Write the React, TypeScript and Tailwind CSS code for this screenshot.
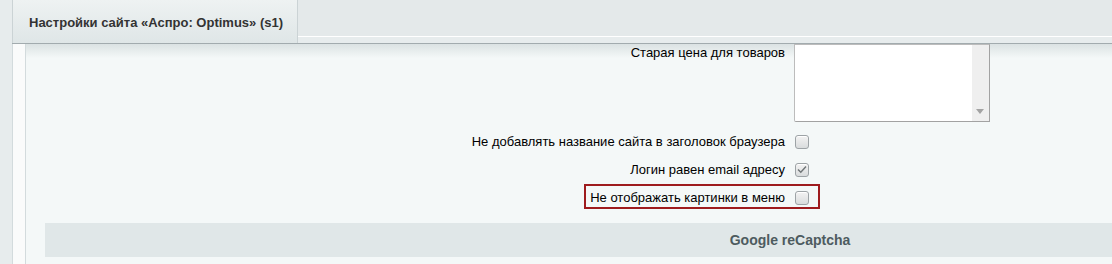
import React from 'react'

type Row = {
  label: string
  checked?: boolean
  highlighted?: boolean
}

const checkRows: Row[] = [
  { label: 'Не добавлять название сайта в заголовок браузера' },
  { label: 'Логин равен email адресу', checked: true },
  { label: 'Не отображать картинки в меню', highlighted: true },
]

const Checkbox = ({ checked }: { checked?: boolean }) => (
  <span className="relative inline-flex h-[14px] w-[14px] items-center justify-center rounded-[3px] border border-[#9da3a6] bg-[linear-gradient(to_bottom,#f3f3f3,#d9dcdd)] shadow-[inset_0_1px_0_#fff]">
    {checked && (
      <svg width="10" height="9" viewBox="0 0 10 9" fill="none">
        <path d="M1 4.5l2.8 2.8L9 1.5" stroke="#6f7577" strokeWidth="1.4" />
      </svg>
    )}
  </span>
)

const App = () => {
  return (
    <div className="relative h-[264px] w-[1112px] overflow-hidden bg-[#e7eced] font-['Liberation_Sans',Arial,sans-serif] text-[13px] text-black">
      {/* Tabs */}
      <div className="flex h-[43px]">
        <div className="w-[12px] shrink-0" />
        <div className="flex w-[286px] shrink-0 items-center border-x border-[#cbd3d5] bg-[linear-gradient(to_bottom,#eef2f2,#dfe6e7)] pl-[16px] pt-[2px] text-[13px] font-bold text-[#333]">
          Настройки сайта «Аспро: Optimus» (s1)
        </div>
        <div className="flex-1">
          <div className="h-[37px] border-b border-white bg-[#e4e9ea]" />
        </div>
      </div>

      {/* Body */}
      <div className="flex">
        <div className="w-[12px] shrink-0" />
        <div className="flex flex-1 border-t border-[#a2abae]">
          <div className="h-[221px] w-[14px] shrink-0 border-x border-[#d3dbdd] bg-[#fafbfb]" />
          <div className="relative flex-1 bg-[linear-gradient(to_bottom,#dbe2e3,#f4f8f8_14px)] pl-[19px]">
            <div className="w-[1490px]">
              {/* Old price row */}
              <div className="grid grid-cols-2">
                <div className="pr-[5px] pt-[1px] text-right leading-[15px]">Старая цена для товаров</div>
                <div className="pl-[4px]">
                  <div className="relative flex h-[78px] w-[196px] rounded-bl-[2px] border border-[#bcbcbc] border-r-[#a2a2a2] border-b-[#a2a2a2] bg-white">
                    <div className="flex-1" />
                    <div className="relative w-[17px] bg-[#efefef]">
                      <svg className="absolute bottom-[7px] left-[4px]" width="8" height="5" viewBox="0 0 8 5">
                        <path d="M0 0h8L4 5z" fill="#a3a3a3" />
                      </svg>
                    </div>
                  </div>
                </div>
              </div>

              {/* Checkbox rows */}
              <div className="mt-[12px] flex flex-col gap-[13px]">
                {checkRows.map((row) => (
                  <div key={row.label} className="grid h-[15px] grid-cols-2 items-center">
                    <div className="pr-[5px] text-right leading-[15px]">{row.label}</div>
                    <div className="flex items-center pl-[5px]">
                      <Checkbox checked={row.checked} />
                    </div>
                  </div>
                ))}
              </div>

              {/* Highlight box */}
              <div className="pointer-events-none absolute left-[558px] top-[140px] h-[25px] w-[236px] border-2 border-[#9e1b1e]" />

              {/* Section header */}
              <div className="mt-[18px] flex h-[34px] items-center justify-center bg-[#e0e7e8] pt-[1px] text-[14px] font-bold text-[#4d5b5f]">
                Google reCaptcha
              </div>
            </div>
          </div>
        </div>
      </div>
    </div>
  )
}

export default App
